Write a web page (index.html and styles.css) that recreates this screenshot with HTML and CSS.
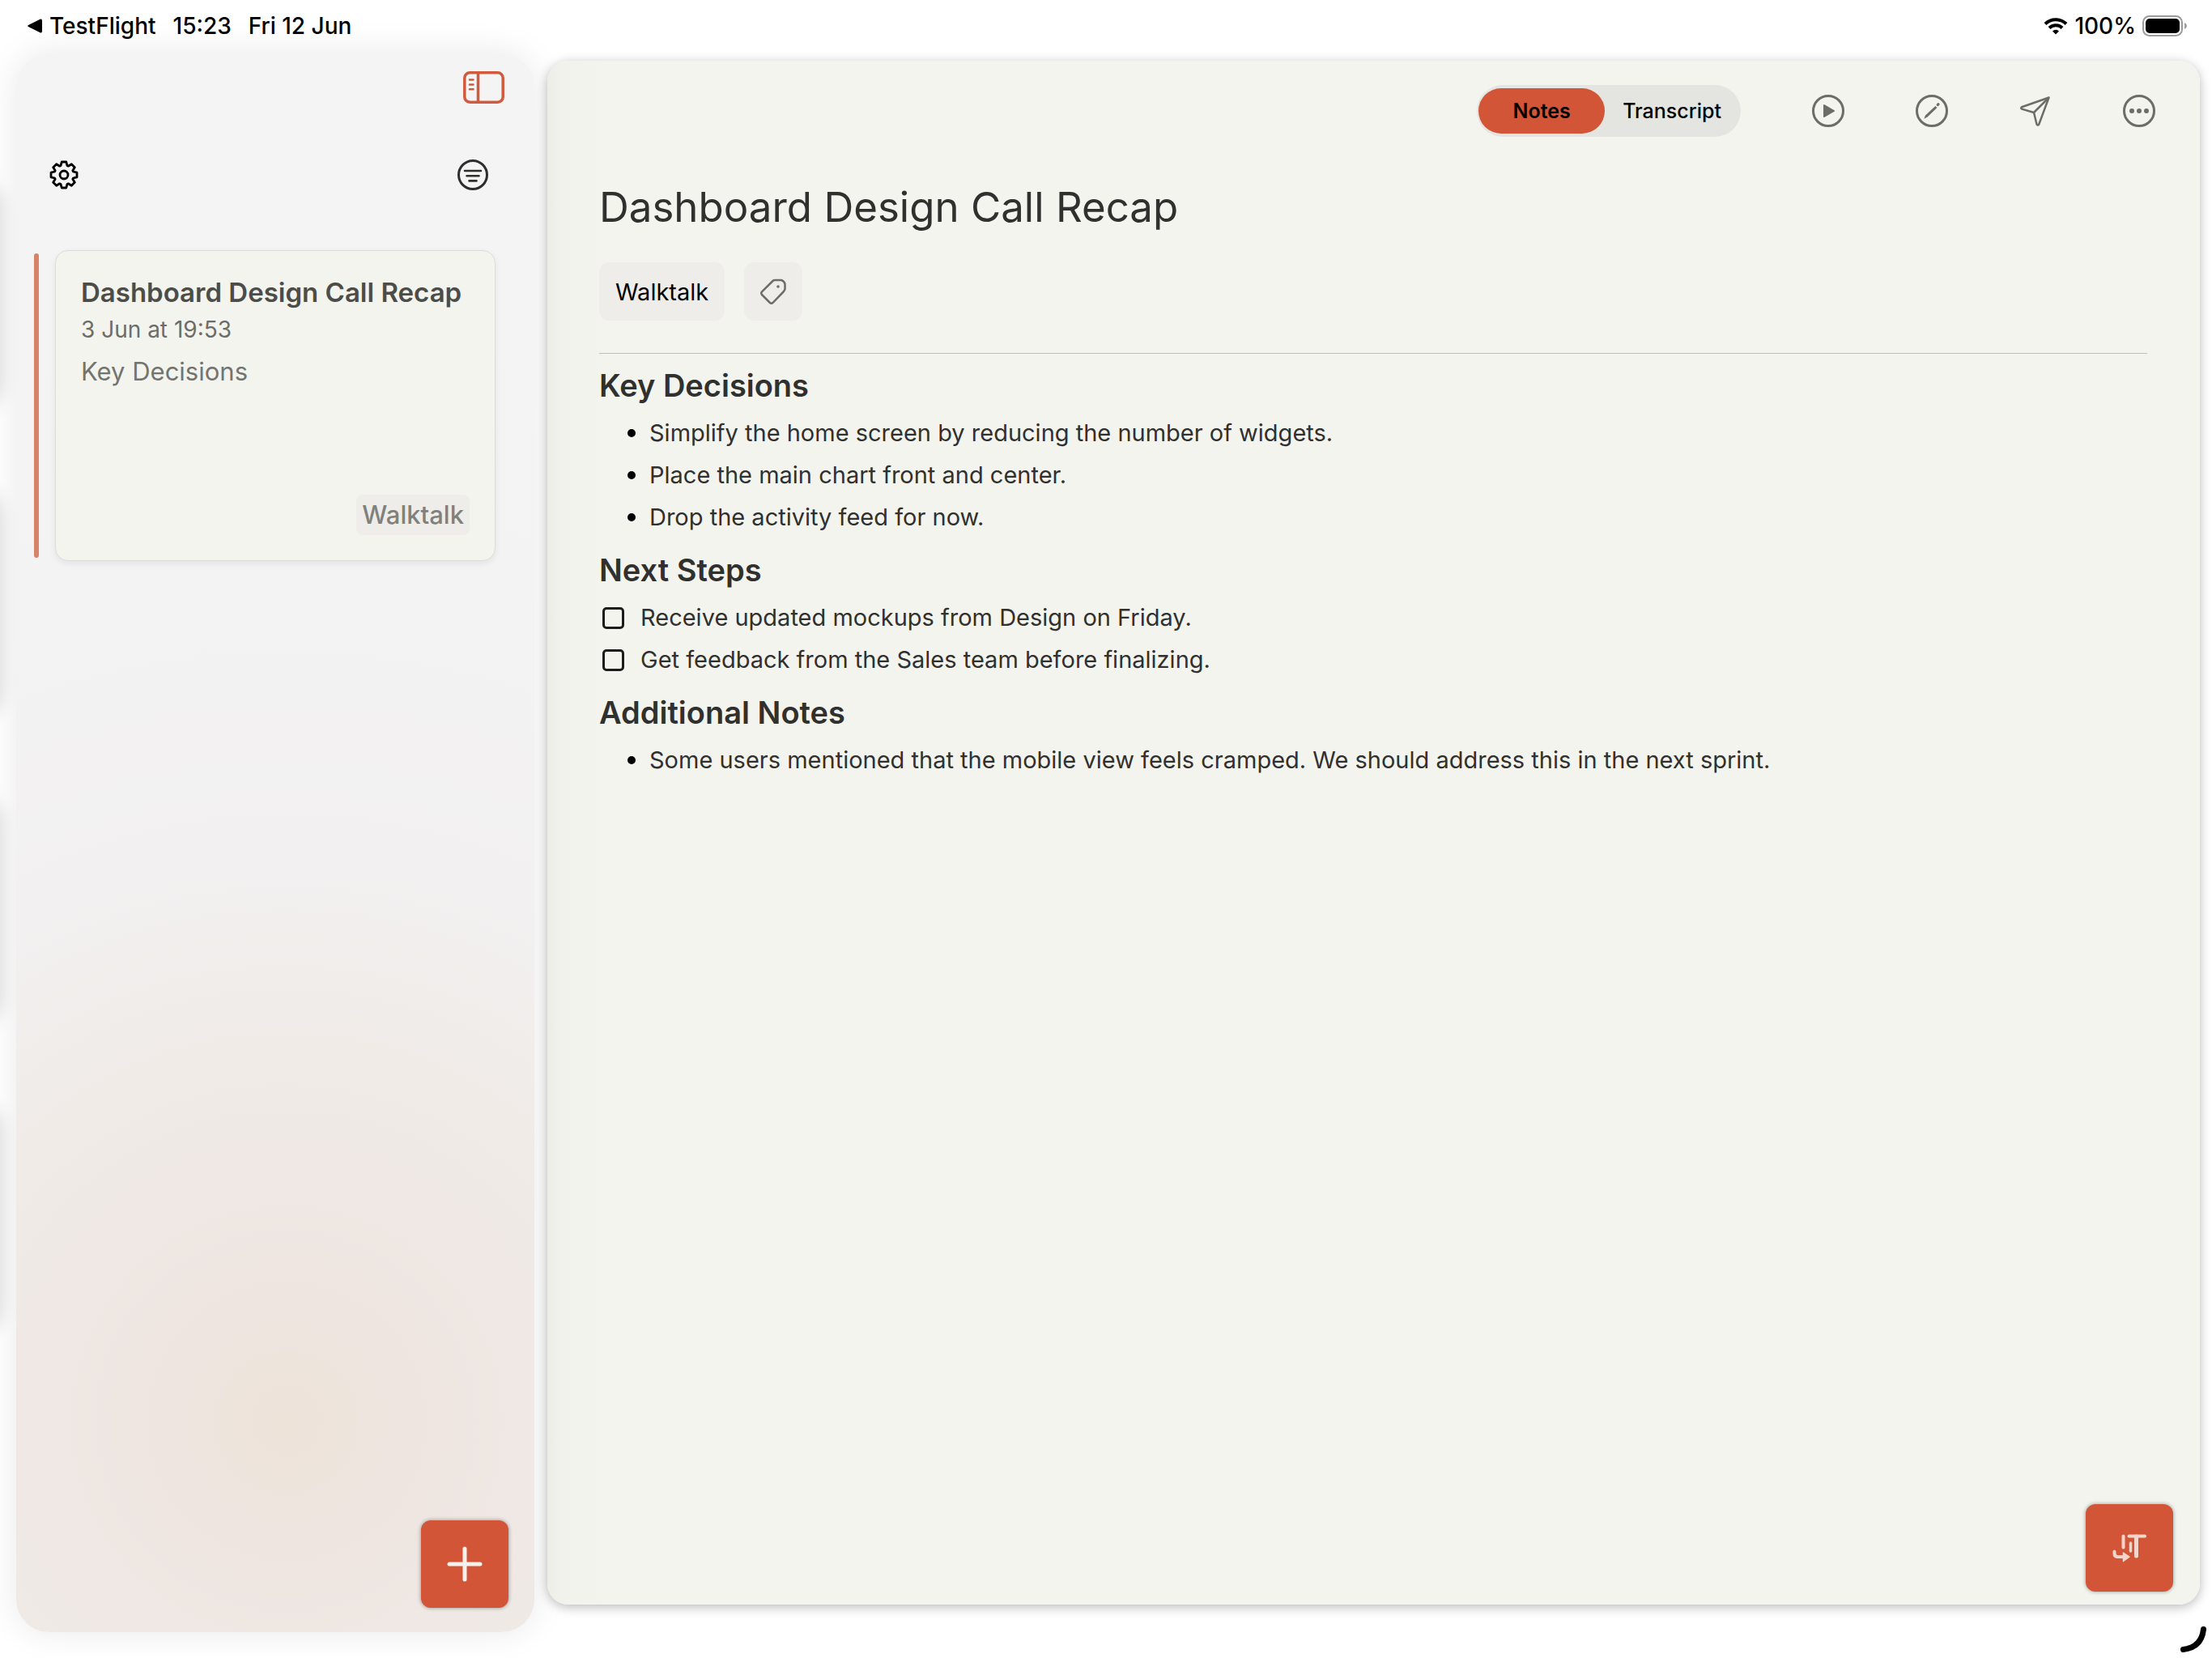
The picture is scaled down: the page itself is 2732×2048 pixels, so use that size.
FILE: index.html
```html
<!DOCTYPE html>
<html lang="en">
<head>
  <meta charset="UTF-8">
  <meta name="viewport" content="width=device-width, initial-scale=1">
  <title>Dashboard Design Call Recap</title>
  <link rel="stylesheet" href="styles.css">
</head>
<body>
  <!-- soft shadows of the cards behind the sidebar -->
  <div class="behind" aria-hidden="true">
    <span></span><span></span><span></span><span></span>
  </div>

  <header class="status-bar">
    <div class="status-left">
      <a href="#" class="back-link">
        <svg width="18" height="18" viewBox="0 0 18 18"><path d="M1 8 L15.500 .8 Q18 0 18 2.500 V15.500 Q18 18 15.500 17.200 L1 10 Q-.5 9 1 8Z" fill="#000"/></svg>
        TestFlight
      </a>
      <span>15:23</span>
      <span>Fri 12 Jun</span>
    </div>
    <div class="status-right">
      <svg width="30" height="22" viewBox="0 0 30 22" fill="none" stroke="#000" stroke-width="4">
        <path d="M2 8.500 A18.500 18.500 0 0 1 28 8.500"/>
        <path d="M7 13.500 A11.500 11.500 0 0 1 23 13.500"/>
        <path d="M15 21.500 L11 17.500 A5.600 5.600 0 0 1 19 17.500 Z" fill="#000" stroke="none"/>
      </svg>
      <span>100%</span>
      <svg width="56" height="26" viewBox="0 0 56 26">
        <rect x="1" y="1" width="48" height="24" rx="7.500" fill="#fff" stroke="#9c9c9c" stroke-width="2"/>
        <rect x="4" y="4" width="42" height="18" rx="5" fill="#000"/>
        <path d="M52 9 Q55 10.500 55 13 T52 17Z" fill="#9c9c9c"/>
      </svg>
    </div>
  </header>

  <div class="layout">
    <aside class="sidebar">
      <button class="icon-btn toggle-btn" aria-label="Toggle sidebar">
        <svg width="51" height="40" viewBox="0 0 51 40" fill="none" stroke="#d05a3e" stroke-width="3.500">
          <rect x="1.800" y="1.800" width="47.400" height="36.400" rx="6.500"/>
          <path d="M18.500 2 V38"/>
          <path d="M8 10.500 H12.500 M8 16.500 H12.500 M8 22.300 H12.500" stroke-width="2.600" stroke-linecap="round"/>
        </svg>
      </button>

      <div class="sidebar-tools">
        <button class="icon-btn" aria-label="Settings">
          <svg width="36" height="36" viewBox="0 0 36 36" fill="none" stroke="#000" stroke-width="2.800" stroke-linejoin="round">
            <path d="M15.200 2 H20.800 L22 6.600 L23.300 7.200 L27.300 4.700 L31.300 8.700 L28.800 12.700 L29.400 14 L34 15.200 V20.800 L29.400 22 L28.800 23.300 L31.300 27.300 L27.300 31.300 L23.300 28.800 L22 29.400 L20.800 34 H15.200 L14 29.400 L12.700 28.800 L8.700 31.300 L4.700 27.300 L7.200 23.300 L6.600 22 L2 20.800 V15.200 L6.600 14 L7.200 12.700 L4.700 8.700 L8.700 4.700 L12.700 7.200 L14 6.600 Z"/>
            <circle cx="18" cy="18" r="5"/>
          </svg>
        </button>
        <button class="icon-btn" aria-label="Filter">
          <svg width="38" height="38" viewBox="0 0 38 38" fill="none" stroke="#2e2e2c" stroke-linecap="round">
            <circle cx="19" cy="19" r="17.500" stroke-width="3"/>
            <path d="M9 14 H29 M11.500 20.200 H26.500 M14.500 26.400 H23.500" stroke-width="2.600"/>
          </svg>
        </button>
      </div>

      <div class="note-row">
        <span class="note-marker"></span>
        <article class="note-card">
          <h2>Dashboard Design Call Recap</h2>
          <time>3 Jun at 19:53</time>
          <p>Key Decisions</p>
          <span class="note-tag">Walktalk</span>
        </article>
      </div>

      <button class="fab" aria-label="New note">
        <svg width="44" height="44" viewBox="0 0 44 44" stroke="#f6f1ea" stroke-width="5" stroke-linecap="round"><path d="M22 3 V41 M3 22 H41"/></svg>
      </button>
    </aside>

    <main class="note">
      <div class="toolbar">
        <div class="segmented" role="tablist">
          <button class="active" role="tab" aria-selected="true">Notes</button>
          <button role="tab" aria-selected="false">Transcript</button>
        </div>
        <button class="icon-btn" aria-label="Play">
          <svg width="40" height="40" viewBox="0 0 40 40">
            <circle cx="20" cy="20" r="18.500" fill="none" stroke="#6c6d68" stroke-width="3"/>
            <path d="M15 13 L27 20 L15 27 Z" fill="#6c6d68" stroke="#6c6d68" stroke-width="2" stroke-linejoin="round"/>
          </svg>
        </button>
        <button class="icon-btn" aria-label="Edit">
          <svg width="40" height="40" viewBox="0 0 40 40">
            <circle cx="20" cy="20" r="18.500" fill="none" stroke="#6c6d68" stroke-width="3"/>
            <path d="M10.300 29.700 L12 25.500 L24.300 14 L26.500 16 L14.500 27.600 Z" fill="#6c6d68"/>
            <path d="M27.200 12.500 L28 11.800" stroke="#6c6d68" stroke-width="3.200" stroke-linecap="round"/>
          </svg>
        </button>
        <button class="icon-btn" aria-label="Share">
          <svg width="40" height="40" viewBox="0 0 40 40" fill="none" stroke="#6c6d68" stroke-width="2.500" stroke-linejoin="round" stroke-linecap="round">
            <path d="M36.500 3.500 L3 15.300 Q1.500 16.500 3 17.600 L18 22 L21.500 36.500 Q23 38.500 24.300 36.500 Z"/>
            <path d="M18 22 L36 4"/>
          </svg>
        </button>
        <button class="icon-btn" aria-label="More">
          <svg width="40" height="40" viewBox="0 0 40 40" fill="#6c6d68">
            <circle cx="20" cy="20" r="18.500" fill="none" stroke="#6c6d68" stroke-width="3"/>
            <circle cx="11" cy="20" r="3"/><circle cx="20" cy="20" r="3"/><circle cx="29" cy="20" r="3"/>
          </svg>
        </button>
      </div>

      <div class="note-content">
        <h1>Dashboard Design Call Recap</h1>
        <div class="tags">
          <button class="tag">Walktalk</button>
          <button class="tag tag-add" aria-label="Add tag">
            <svg width="34" height="34" viewBox="0 0 34 34">
              <path d="M19 3 H27 Q31 4.500 31.500 8 V14 Q31 16 29.500 17.500 L16.500 31 Q14.700 32.500 13 31 L3 21 Q1.500 19 3 17.300 L16.500 4 Q17.500 3 19 3 Z" fill="none" stroke="#6c6d68" stroke-width="2.500" stroke-linejoin="round"/>
              <circle cx="23" cy="11" r="1.800" fill="#6c6d68"/>
            </svg>
          </button>
        </div>
        <hr>

        <h2>Key Decisions</h2>
        <ul class="bullets">
          <li>Simplify the home screen by reducing the number of widgets.</li>
          <li>Place the main chart front and center.</li>
          <li>Drop the activity feed for now.</li>
        </ul>

        <h2>Next Steps</h2>
        <ul class="todos">
          <li><input type="checkbox" id="todo1"><label for="todo1">Receive updated mockups from Design on Friday.</label></li>
          <li><input type="checkbox" id="todo2"><label for="todo2">Get feedback from the Sales team before finalizing.</label></li>
        </ul>

        <h2>Additional Notes</h2>
        <ul class="bullets">
          <li>Some users mentioned that the mobile view feels cramped. We should address this in the next sprint.</li>
        </ul>
      </div>

      <button class="fab" aria-label="Convert text">
        <svg width="44" height="38" viewBox="0 0 44 38" fill="none" stroke="#f5d5ca" stroke-width="4" stroke-linecap="round">
          <path d="M21.500 4.500 H41"/>
          <path d="M30.500 5 V29" stroke-width="5"/>
          <path d="M14.500 4.500 V18.500"/>
          <path d="M23.500 13 V23" stroke-width="3.500"/>
          <path d="M3.500 23.500 V26 Q3.500 30 8 30 H14" stroke-linejoin="round"/>
          <path d="M14.500 25 L22 30 L14.500 35.500 Z" fill="#f5d5ca" stroke-width="1.500" stroke-linejoin="round"/>
        </svg>
      </button>
    </main>
  </div>

  <!-- window resize handle -->
  <svg class="resize-handle" width="34" height="34" viewBox="0 0 34 34" fill="none" stroke="#000" stroke-width="7" stroke-linecap="round"><path d="M29.500 4.500 Q27 27 4.500 29.500"/></svg>
</body>
</html>
```

FILE: styles.css
```css
* { box-sizing: border-box; }

body {
  margin: 0;
  min-height: 100vh;
  display: flex;
  flex-direction: column;
  background: #fff;
  font-family: Inter, "Liberation Sans", sans-serif;
  color: #30302e;
  position: relative;
  overflow-x: hidden;
}

h1, h2, p, ul { margin: 0; padding: 0; }
ul { list-style: none; }

button {
  font-family: inherit;
  border: none;
  padding: 0;
  background: none;
  cursor: pointer;
}
svg { display: block; }

.icon-btn { display: flex; }

/* status bar */
.status-bar {
  height: 66px;
  padding: 0 30px 0 34px;
  display: flex;
  justify-content: space-between;
  align-items: flex-start;
  font-size: 28px;
  line-height: 64px;
  font-weight: 500;
  color: #000;
  position: relative;
  z-index: 1;
}
.status-left { display: flex; gap: 21px; }
.status-right { display: flex; align-items: center; gap: 8px; }
.back-link {
  display: flex;
  align-items: center;
  gap: 9px;
  color: #000;
  text-decoration: none;
}

.layout {
  flex: 1;
  display: grid;
  grid-template-columns: minmax(360px, 640px) 1fr;
  gap: 16px;
  padding: 0 15px 32px 20px;
}

/* sidebar */
.sidebar {
  display: flex;
  flex-direction: column;
  padding: 22px 32px 30px 22px;
  border-radius: 40px;
  background: radial-gradient(circle at 334px calc(100% - 260px),
    #ede3d9 0, #eee5e0 150px, #efe8e4 300px, #f0ebe7 460px, #f2f0f0 680px, #f4f3f4 1000px, #f4f4f4 1400px);
  box-shadow: 0 0 44px rgba(0, 0, 0, 0.09);
  position: relative;
}
.toggle-btn { align-self: flex-end; margin-right: 5px; }
.sidebar-tools {
  display: flex;
  justify-content: space-between;
  align-items: center;
  margin: 69px 25px 74px 19px;
}
.note-row {
  display: flex;
  gap: 20px;
  margin-right: 16px;
}
.note-marker {
  width: 6px;
  margin: 4px 0;
  border-radius: 3px;
  background: #d9826a;
}
.note-card {
  flex: 1;
  min-height: 384px;
  display: flex;
  flex-direction: column;
  padding: 29px 31px 31px;
  border: 1px solid #dcdcd9;
  border-radius: 16px;
  background: #f4f4ef;
  box-shadow: 0 3px 8px rgba(0, 0, 0, 0.07);
}
.note-card h2 {
  font-size: 33px;
  line-height: 44px;
  font-weight: 600;
  color: #4c4c49;
}
.note-card time {
  margin-top: 6px;
  font-size: 28px;
  line-height: 36px;
  color: #6c6d68;
}
.note-card p {
  margin-top: 14px;
  font-size: 31px;
  line-height: 40px;
  color: #73746f;
}
.note-tag {
  margin-top: auto;
  align-self: flex-end;
  padding: 0 7px;
  border-radius: 8px;
  background: #eeede9;
  font-size: 31px;
  line-height: 50px;
  font-weight: 500;
  color: #80817c;
}

.fab {
  width: 108px;
  height: 108px;
  margin-top: auto;
  align-self: flex-end;
  display: flex;
  align-items: center;
  justify-content: center;
  border-radius: 12px;
  background: #d25538;
  box-shadow: 0 0 5px rgba(0, 0, 0, 0.4);
}

/* note */
.note {
  display: flex;
  flex-direction: column;
  min-width: 0;
  margin: 9px 0 34px;
  padding: 30px 33px 16px 64px;
  border-radius: 26px;
  background: linear-gradient(90deg, #ecede6, #f1f2ec 16px, #f4f4ef 70px);
  box-shadow: 0 3px 14px rgba(0, 0, 0, 0.28);
  position: relative;
}
.toolbar {
  display: flex;
  justify-content: flex-end;
  align-items: center;
  gap: 88px;
  margin-right: 22px;
}
.segmented {
  display: flex;
  padding: 4px 2px;
  border-radius: 32px;
  background: #e4e4e1;
}
.segmented button {
  min-width: 156px;
  height: 56px;
  padding: 0 22px;
  border-radius: 28px;
  font-size: 25px;
  font-weight: 500;
  color: #000;
}
.segmented .active {
  background: #d25538;
  font-weight: 600;
}

.note-content { margin: 55px 32px 0 0; }
.note-content h1 {
  font-size: 51px;
  line-height: 64px;
  font-weight: 400;
}
.tags {
  display: flex;
  gap: 24px;
  margin: 36px 0 40px;
}
.tag {
  height: 72px;
  padding: 0 20px;
  border-radius: 12px;
  background: #eeede9;
  font-size: 29px;
  color: #000;
}
.tag-add { padding: 0 19px; }
.note-content hr {
  height: 1px;
  margin: 0;
  border: none;
  background: #bfbfbb;
}
.note-content h2 {
  margin: 15px 0 9px;
  font-size: 38px;
  line-height: 48px;
  font-weight: 600;
}
.note-content li {
  display: flex;
  align-items: center;
  font-size: 29px;
  line-height: 52px;
}
.bullets { padding-left: 35px; }
.bullets li::before {
  content: "";
  flex: none;
  width: 10px;
  height: 10px;
  margin-right: 17px;
  border-radius: 50%;
  background: #000;
}
.todos input {
  appearance: none;
  flex: none;
  width: 27px;
  height: 27px;
  margin: 0 20px 0 4px;
  border: 3px solid #1c1c1a;
  border-radius: 5px;
}
.todos input:checked { background: #d25538; }

/* cards peeking out on the left edge */
.behind {
  position: absolute;
  left: -60px;
  top: 230px;
  width: 60px;
  display: flex;
  flex-direction: column;
  gap: 110px;
}
.behind span {
  height: 270px;
  border-radius: 20px;
  box-shadow: 0 0 24px rgba(0, 0, 0, 0.16);
}

.resize-handle {
  position: absolute;
  right: 6px;
  bottom: 6px;
}
```
